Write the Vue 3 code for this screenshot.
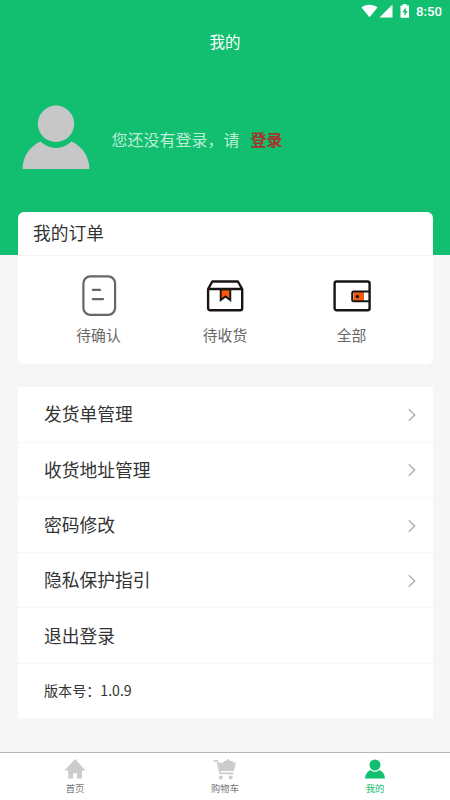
<script setup>
const rows = [
  { text: '发货单管理', arrow: true },
  { text: '收货地址管理', arrow: true },
  { text: '密码修改', arrow: true },
  { text: '隐私保护指引', arrow: true },
  { text: '退出登录' },
  { text: '版本号：1.0.9', small: true },
]
</script>

<template>
  <div class="page" lang="zh-CN">
    <header class="hero">
      <div class="status">
        <svg class="status-icons" width="54" height="22" viewBox="0 0 54 22">
          <path d="M1.500 7.500C5.800 3.700 13.200 3.700 17.500 7.500L9.500 17.200Z" fill="#fff" />
          <path d="M32.500 4.500V17.500H19.500Z" fill="#fff" />
          <path d="M40.500 5.400h2.400V4h3.600v1.400H49v12.400h-8.500z" fill="#fff" />
          <path d="M45.800 7.200l-3.300 5h2v3.700l3.200-5h-1.900z" fill="#12be6f" />
        </svg>
        <span class="clock">8:50</span>
      </div>
      <h1 class="title">我的</h1>
      <div class="user">
        <svg class="avatar" width="68" height="66" viewBox="0 0 68 66">
          <circle cx="34" cy="18.800" r="18.200" fill="#c7c7c7" />
          <path d="M.5 64C.8 51.500 7.500 41.500 18.500 36.500C27 45 41 45 49.500 36.500C60.500 41.500 67 51.500 67.500 64Z" fill="#c7c7c7" />
        </svg>
        <span class="hint">您还没有登录，请</span>
        <a class="login">登录</a>
      </div>
    </header>

    <section class="orders">
      <h2 class="orders-title">我的订单</h2>
      <div class="orders-grid">
        <div class="order">
          <svg width="44" height="44" viewBox="0 0 44 44" fill="none" stroke="#666" stroke-width="2.200" stroke-linecap="round">
            <rect x="6.400" y="3.300" width="31.700" height="38.600" rx="7" />
            <path d="M15.800 16.900h7.200M15.800 26.200h10.200" />
          </svg>
          <span>待确认</span>
        </div>
        <div class="order">
          <svg width="44" height="44" viewBox="0 0 44 44" fill="none" stroke="#1b1414" stroke-width="2.400" stroke-linejoin="round">
            <path d="M17.700 16.200V27L22.500 23.400L27.300 27V16.200Z" fill="#fa5a0a" stroke-linejoin="miter" stroke-width="1.900" />
            <path d="M5.100 16L9.300 8.500H34.900L39.200 16V35.200a2 2 0 0 1-2 2H7.100a2 2 0 0 1-2-2ZM5.100 16H39.200" />
          </svg>
          <span>待收货</span>
        </div>
        <div class="order">
          <svg width="44" height="44" viewBox="0 0 44 44" fill="none" stroke="#1b1414" stroke-width="2.400">
            <path d="M23.500 19.100H34V28H23.500Z" fill="#fa5a0a" stroke="none" />
            <rect x="4.600" y="8.500" width="35" height="28.700" rx="2" />
            <path d="M39.600 18.600H23.700a1.500 1.500 0 0 0-1.500 1.500V26.800a1.500 1.500 0 0 0 1.500 1.500H39.600" stroke-width="2" />
            <circle cx="27.300" cy="23.500" r="1.800" fill="#1b1414" stroke="none" />
          </svg>
          <span>全部</span>
        </div>
      </div>
    </section>

    <section class="menu">
      <div v-for="row in rows" :key="row.text" class="row" :class="{ small: row.small }">
        <span>{{ row.text }}</span>
        <svg v-if="row.arrow" width="10" height="14" viewBox="0 0 10 14" fill="none" stroke="#b2b2b2" stroke-width="1.500">
          <path d="M1.800 1.300L7.700 7L1.800 12.700" />
        </svg>
      </div>
    </section>

    <nav class="tabs">
      <div class="tab">
        <svg width="24" height="22" viewBox="0 0 24 22" fill="#ccc">
          <path d="M12 1L22.500 12.500H19V20.600H14V15.300H10V20.600H5.200V12.500H1.500Z" />
        </svg>
        <span>首页</span>
      </div>
      <div class="tab">
        <svg width="24" height="22" viewBox="0 0 24 22" fill="#ccc">
          <path d="M.5 2H4.700L5.400 4.800H10L11 3H13L15 .8L17.500 3H19.500L20.500 4.800H23L20.800 13H7.700L8 14.600H20.500V16.200H6.500L3.600 3.500H.5Z" />
          <circle cx="7.800" cy="19.600" r="2" />
          <circle cx="17.700" cy="19.600" r="2" />
        </svg>
        <span>购物车</span>
      </div>
      <div class="tab active">
        <svg width="24" height="22" viewBox="0 0 24 22" fill="#12be6f">
          <circle cx="12" cy="7" r="5.500" />
          <path d="M2 20.500C2.200 16.500 4 13.700 7.300 12C10 14.400 14 14.400 16.700 12C20 13.700 21.800 16.500 22 20.500Z" />
        </svg>
        <span>我的</span>
      </div>
    </nav>
  </div>
</template>

<style>
body {
  margin: 0;
  background: #f6f6f6;
}
</style>

<style scoped>
.page {
  box-sizing: border-box;
  display: flex;
  flex-direction: column;
  width: 450px;
  height: 800px;
  overflow: hidden;
  background: #f6f6f6;
  font-family: "Noto Sans CJK SC", sans-serif;
  font-weight: 400;
  color: #333;
}
.hero {
  flex: none;
  height: 255px;
  background: #12be6f;
  color: #fff;
}
.status {
  display: flex;
  justify-content: flex-end;
  height: 22px;
  padding-right: 8px;
}
.clock {
  width: 26px;
  margin-left: 2px;
  font: 500 13.200px/23px Roboto, sans-serif;
  white-space: nowrap;
}
.title {
  margin: 0;
  height: 40px;
  font-size: 15.500px;
  font-weight: 400;
  line-height: 38px;
  text-align: center;
}
.user {
  display: flex;
  align-items: center;
  height: 66px;
  padding: 43px 0 0 22px;
}
.hint,
.login {
  padding-top: 2px;
  font-size: 16px;
}
.hint {
  margin-left: 21.500px;
  color: #bdeed7;
}
.login {
  margin-left: 11px;
  font-weight: 700;
  color: #a2352a;
}
.orders {
  flex: none;
  height: 151.500px;
  margin: -43px 17px 0 18px;
  border-radius: 6px;
  background: #fff;
}
.orders-title {
  box-sizing: border-box;
  height: 44px;
  margin: 0;
  padding-left: 15px;
  border-bottom: 1px solid #f5f5f5;
  font-size: 17.750px;
  font-weight: 400;
  line-height: 40px;
}
.orders-grid {
  display: grid;
  grid-template-columns: repeat(3, 126.500px);
  justify-content: center;
  padding: 17px 1px 0 0;
}
.order {
  display: flex;
  flex-direction: column;
  align-items: center;
  font-size: 14.800px;
  line-height: 22px;
  color: #666;
}
.order span {
  margin-top: 7px;
}
.menu {
  flex: none;
  margin: 23.800px 17px 0 18px;
  background: #fff;
}
.row {
  box-sizing: border-box;
  display: flex;
  align-items: center;
  justify-content: space-between;
  height: 55.300px;
  padding: 0 16px 0 26px;
  border-bottom: 1px solid #f7f7f7;
  font-size: 17.750px;
}
.row span {
  padding-bottom: 2px;
}
.row svg {
  margin-top: 1px;
}
.row:last-child {
  height: 54.500px;
  border-bottom: 0;
}
.small {
  font-size: 14.100px;
}
.tabs {
  display: grid;
  grid-template-columns: repeat(3, 1fr);
  height: 47px;
  margin-top: auto;
  border-top: 1px solid #b5b5b5;
  background: #fff;
}
.tab {
  display: flex;
  flex-direction: column;
  align-items: center;
  padding-top: 5px;
  font-size: 9.300px;
  line-height: 14px;
  color: #777;
}
.tab span {
  margin-top: 1px;
}
.active {
  color: #12be6f;
}
</style>
